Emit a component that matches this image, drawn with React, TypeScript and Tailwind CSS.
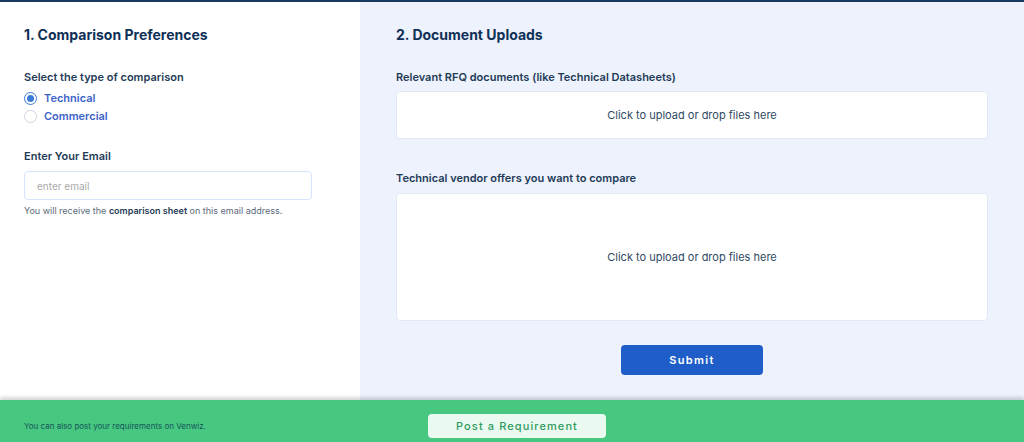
export default function App() {
  return (
    <div className="flex h-[442px] w-[1024px] flex-col overflow-hidden font-['Inter',sans-serif]">
      <div className="h-[2px] bg-[#17385f]" />
      <div className="flex flex-1">
        <div className="w-[360px] bg-white px-6 pt-[23px]">
          <h2 className="text-[14px] leading-[20px] font-bold text-[#0f3057]">1. Comparison Preferences</h2>
          <p className="mt-[25px] text-[11px] leading-[14px] font-semibold text-[#1f3b57]">Select the type of comparison</p>
          <div className="mt-[7px] flex flex-col gap-[4px]">
            <label className="flex h-[14px] items-center gap-[7px] text-[11px] font-semibold text-[#3d63c9]">
              <span className="flex h-[13px] w-[13px] items-center justify-center rounded-full border border-[#3a7bd5]">
                <span className="h-[7px] w-[7px] rounded-full bg-[#3a7bd5]" />
              </span>
              Technical
            </label>
            <label className="flex h-[14px] items-center gap-[7px] text-[11px] font-semibold text-[#3d63c9]">
              <span className="h-[13px] w-[13px] rounded-full border border-[#cfd5dd]" />
              Commercial
            </label>
          </div>
          <p className="mt-[26px] text-[11px] leading-[14px] font-semibold text-[#1f3b57]">Enter Your Email</p>
          <input
            placeholder="enter email"
            className="mt-[8px] h-[29px] w-[288px] rounded-[4px] border border-[#d6e4fb] px-3 text-[10px] text-[#333] placeholder:text-[#a9a9a9] outline-none"
          />
          <p className="mt-[5px] text-[9px] leading-[12px] text-[#5c6b7a]">
            You will receive the <span className="font-semibold text-[#1f3b57]">comparison sheet</span> on this email address.
          </p>
        </div>
        <div className="flex flex-1 flex-col bg-[#edf2fc] pl-9 pr-9 pt-[23px]">
          <h2 className="text-[14px] leading-[20px] font-bold text-[#0f3057]">2. Document Uploads</h2>
          <p className="mt-[25px] text-[11px] leading-[14px] font-semibold text-[#1f3b57]">Relevant RFQ documents (like Technical Datasheets)</p>
          <div className="mt-[7px] flex h-[48px] w-[592px] items-center justify-center rounded-[4px] border border-[#e2e9f6] bg-white text-[11px] text-[#2f4a63]">
            Click to upload or drop files here
          </div>
          <p className="mt-[32px] text-[11px] leading-[14px] font-semibold text-[#1f3b57]">Technical vendor offers you want to compare</p>
          <div className="mt-[8px] flex h-[128px] w-[592px] items-center justify-center rounded-[4px] border border-[#e2e9f6] bg-white text-[11px] text-[#2f4a63]">
            Click to upload or drop files here
          </div>
          <div className="mt-[24px] flex w-[592px] justify-center">
            <button className="h-[30px] w-[142px] rounded-[4px] bg-[#1f5ec8] text-[11px] font-semibold tracking-[0.12em] text-white">
              Submit
            </button>
          </div>
        </div>
      </div>
      <div className="flex h-[42px] items-center bg-[#47c780] pt-[10px] shadow-[0_-3px_3px_rgba(0,0,0,0.15)]">
        <p className="w-[428px] pl-6 text-[8px] text-[#16565a]">You can also post your requirements on Venwiz.</p>
        <button className="h-[24px] w-[178px] rounded-[4px] bg-[#eafaf0] text-[11px] font-medium tracking-[0.1em] text-[#2f9a5f]">
          Post a Requirement
        </button>
      </div>
    </div>
  );
}
